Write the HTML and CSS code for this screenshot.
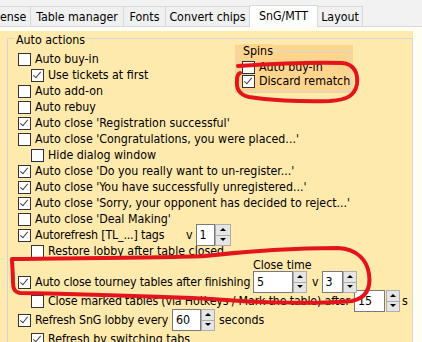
FILE: index.html
```html
<!DOCTYPE html>
<html lang="en">
<head>
	<meta charset="UTF-8">
	<title>SnG/MTT</title>
	<link rel="stylesheet" href="styles.css">
</head>
<body>
	<div class="tabs">
		<div class="tab tab-first">ense</div>
		<div class="tab tab-tables">Table manager</div>
		<div class="tab tab-fonts">Fonts</div>
		<div class="tab tab-chips">Convert chips</div>
		<div class="tab tab-active">SnG/MTT</div>
		<div class="tab tab-layout">Layout</div>
	</div>
	<div class="page">
		<div class="panel">
			<div class="group">
				<div class="title">Auto actions</div>
				<div class="top">
					<div class="left">
						<div class="row"><span class="cb"></span>Auto buy-in</div>
						<div class="row sub"><span class="cb on"></span>Use tickets at first</div>
						<div class="row"><span class="cb"></span>Auto add-on</div>
						<div class="row"><span class="cb"></span>Auto rebuy</div>
					</div>
					<div class="spins">
						<div class="spins-box">
							<div class="spins-title">Spins</div>
							<div class="srow first"><span class="cb"></span>Auto buy-in</div>
							<div class="srow"><span class="cb on"></span>Discard rematch</div>
						</div>
					</div>
				</div>
				<div class="row"><span class="cb on"></span>Auto close 'Registration successful'</div>
				<div class="row"><span class="cb"></span>Auto close 'Congratulations, you were placed...'</div>
				<div class="row sub"><span class="cb focus"></span>Hide dialog window</div>
				<div class="row"><span class="cb on"></span>Auto close 'Do you really want to un-register...'</div>
				<div class="row"><span class="cb on"></span>Auto close 'You have successfully unregistered...'</div>
				<div class="row"><span class="cb on"></span>Auto close 'Sorry, your opponent has decided to reject...'</div>
				<div class="row"><span class="cb"></span>Auto close 'Deal Making'</div>
				<div class="row">
					<span class="cb on"></span><span class="lbl lbl-refresh">Autorefresh [TL_...] tags</span>
					<span class="v">v</span>
					<span class="num num-tags">1</span><span class="spin spin-wide"><i class="up"></i><i class="dn"></i></span>
				</div>
				<div class="row sub"><span class="cb"></span>Restore lobby after table closed</div>
				<div class="caption">Close time</div>
				<div class="row">
					<span class="cb on"></span><span class="lbl lbl-tourney">Auto close tourney tables after finishing</span>
					<span class="num num-time">5</span><span class="spin"><i class="up"></i><i class="dn"></i></span>
					<span class="v v-mid">v</span>
					<span class="num num-small">3</span><span class="spin"><i class="up"></i><i class="dn"></i></span>
				</div>
				<div class="row sub gap">
					<span class="cb"></span><span class="lbl lbl-marked">Close marked tables (via Hotkeys / Mark the table) after</span>
					<span class="num num-marked">15</span><span class="spin spin-gap"><i class="up"></i><i class="dn"></i></span>
					<span class="unit">s</span>
				</div>
				<div class="row gap">
					<span class="cb on"></span><span class="lbl lbl-lobby">Refresh SnG lobby every</span>
					<span class="num num-lobby">60</span><span class="spin"><i class="up"></i><i class="dn"></i></span>
					<span class="unit unit-sec">seconds</span>
				</div>
				<div class="row sub gap"><span class="cb on"></span>Refresh by switching tabs</div>
			</div>
		</div>
	</div>

	<svg class="marks" width="422" height="342" viewBox="0 0 422 342">
		<path d="M238,66 C270,64 310,62 342,63 C355,64 358,74 357,84 C355,96 346,100 330,101 C300,102 266,100 249,97 C239,95 236,88 237,80 C237,76 238,74 240,73"/>
		<path d="M12,259 C60,258 160,258 205,256 C240,252 290,248 338,248 C357,249 367,260 369,274 C371,288 366,298 352,301 C320,304 260,303 211,299 C150,296 70,294 20,293 C14,292 13,288 13,282 C13,272 12,265 12,259"/>
	</svg>
</body>
</html>
```

FILE: styles.css
```css
body {
	margin: 0;
	width: 422px;
	height: 342px;
	overflow: hidden;
	position: relative;
	background: #f2f2f2;
	color: #000;
	font-family: "DejaVu Sans Condensed", "DejaVu Sans", sans-serif;
	font-stretch: condensed;
	font-size: 12.3px;
}

/* tab strip */
.tabs {
	display: flex;
	height: 20px;
	padding-top: 6px;
	border-bottom: 1px solid #d9d9d9;
}
.tab {
	box-sizing: border-box;
	height: 20px;
	line-height: 20px;
	text-align: center;
	background: #f0f0f0;
	border-top: 1px solid #d9d9d9;
	border-right: 1px solid #d9d9d9;
	white-space: nowrap;
	flex: none;
}
.tab-first {
	width: 31px;
	text-align: left;
}
.tab-tables { width: 93px; }
.tab-fonts { width: 42px; }
.tab-chips { width: 84px; }
.tab-active {
	width: 69px;
	height: 22px;
	margin-top: -1px;
	margin-left: -1px;
	line-height: 20px;
	background: #fff;
	border-left: 1px solid #d9d9d9;
	position: relative;
	z-index: 1;
}
.tab-layout { width: 45px; }

/* tab page */
.page {
	height: 315px;
	padding-top: 4px;
	box-sizing: border-box;
	background: #fffef2;
}
.panel {
	width: 413px;
	height: 311px;
	box-sizing: border-box;
	padding: 7px 0 0 7px;
	background: #ffeaae;
	overflow: hidden;
}
.group {
	height: 400px;
	border: 1px solid #d6d4da;
	border-bottom: none;
}
.title {
	display: table;
	margin: -7px 0 3px 7px;
	padding: 0 1px;
	line-height: 16px;
	background: #ffeaae;
}

.row {
	display: flex;
	align-items: center;
	height: 16px;
	padding-left: 10px;
	white-space: nowrap;
}
.row.sub { padding-left: 23px; }
.row.gap { margin-top: 3px; }

.cb {
	flex: none;
	box-sizing: border-box;
	width: 13px;
	height: 13px;
	margin-right: 4px;
	border: 1px solid #333;
	background: #fff;
	position: relative;
}
.cb.focus { border-color: #1f2f4f; }
.cb.on::after {
	content: "";
	position: absolute;
	left: 3px;
	top: 0;
	width: 3px;
	height: 7px;
	border-right: 1px solid #444;
	border-bottom: 1px solid #444;
	transform: rotate(40deg);
}

/* spins box */
.top {
	display: grid;
	grid-template-columns: 227px 118px;
	align-items: start;
}
.spins {
	height: 48px;
	margin-top: -6px;
	padding: 6px 2px 1px 2px;
	box-sizing: border-box;
	background: #ffd48c;
}
.spins-box {
	height: 100%;
	box-sizing: border-box;
	border: 1px solid #dcd6d6;
}
.spins-title {
	display: table;
	margin: -8px 0 0 5px;
	line-height: 14px;
	background: #ffd48c;
}
.srow {
	display: flex;
	align-items: center;
	height: 14px;
	padding-left: 4px;
	white-space: nowrap;
}
.srow.first { margin-top: 2px; }

/* numeric fields */
.lbl {
	flex: none;
	letter-spacing: -0.15px;
}
.lbl-refresh { width: 151px; }
.lbl-tourney { width: 218px; }
.lbl-marked { width: 306px; }
.lbl-lobby { width: 137px; }

.v { margin-right: 3px; }
.v-mid { margin: 0 3px 0 5px; }

.num {
	flex: none;
	box-sizing: border-box;
	height: 22px;
	line-height: 20px;
	padding-left: 3px;
	border: 1px solid #7a7a7a;
	background: #fff;
}
.num-tags { width: 19px; }
.num-time { width: 40px; }
.num-small { width: 21px; }
.num-marked { width: 31px; }
.num-lobby { width: 29px; }

.spin {
	flex: none;
	display: flex;
	flex-direction: column;
	width: 14px;
	height: 22px;
}
.spin-wide { width: 16px; }
.spin-gap { margin-left: 1px; }
.spin i {
	flex: 1;
	box-sizing: border-box;
	border: 1px solid #adadad;
	background: #e5e5e5;
	position: relative;
}
.spin i.dn { border-top: none; }
.spin i::after {
	content: "";
	position: absolute;
	left: 50%;
	top: 50%;
	margin: -2px 0 0 -3px;
	border-left: 3px solid transparent;
	border-right: 3px solid transparent;
}
.spin i.up::after { border-bottom: 3px solid #000; }
.spin i.dn::after { border-top: 3px solid #000; }

.unit { margin-left: 2px; }
.unit-sec { margin-left: 4px; }

.caption {
	height: 17px;
	line-height: 17px;
	margin-top: -2px;
	padding-left: 245px;
}

/* red hand-drawn marks */
.marks {
	position: absolute;
	left: 0;
	top: 0;
	pointer-events: none;
	z-index: 2;
}
.marks path {
	fill: none;
	stroke: #e4141c;
	stroke-width: 4;
	stroke-linecap: round;
	stroke-linejoin: round;
}
```
